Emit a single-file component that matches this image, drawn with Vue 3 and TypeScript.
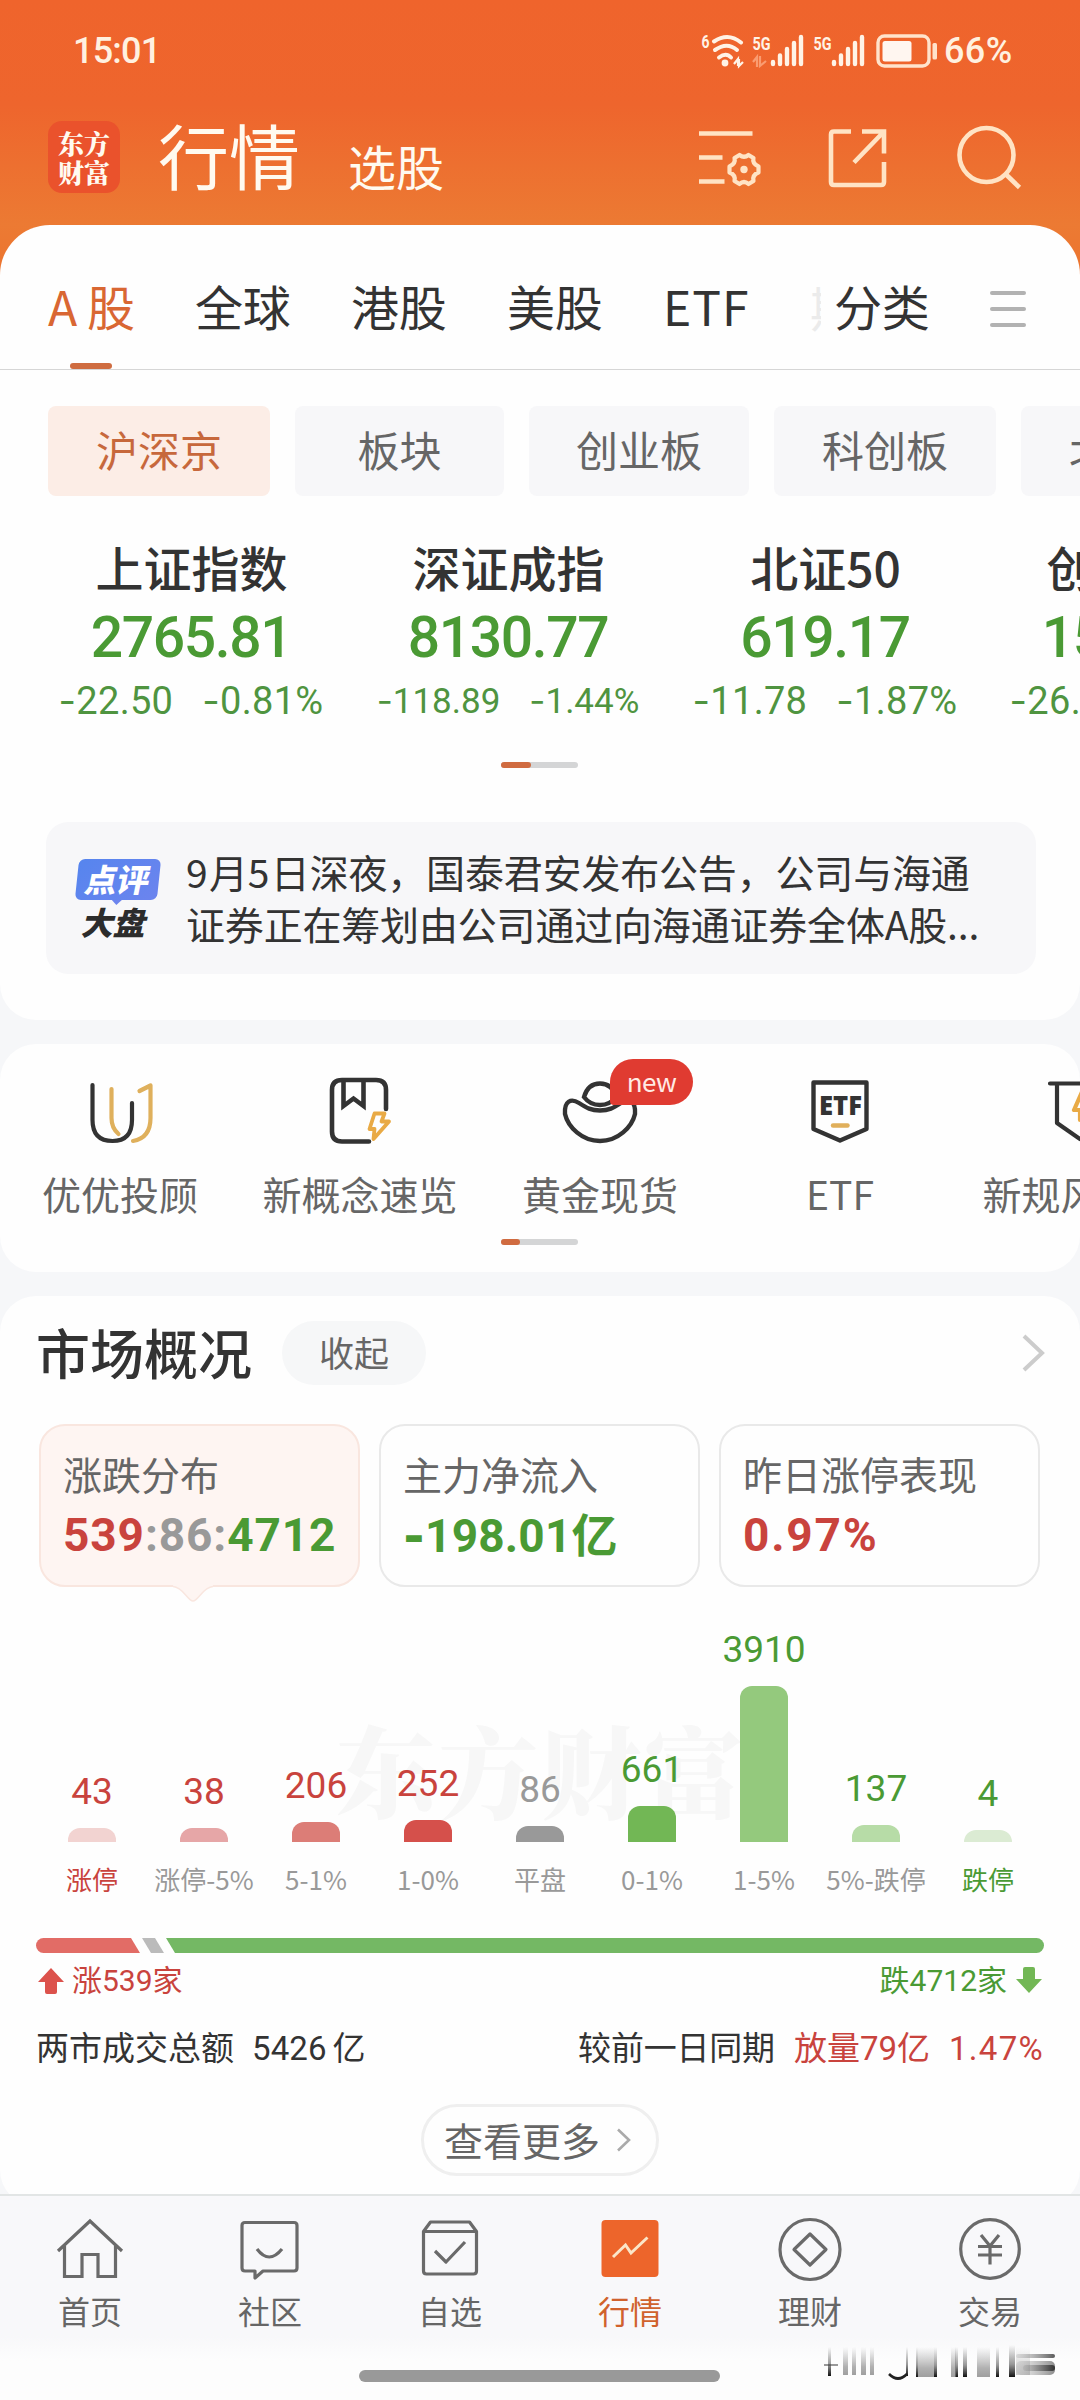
<script setup lang="ts">
interface Quote { name: string; price: string; diff: string; pct: string; small?: boolean }
interface Bar { value: string; label: string; height: number; fill: string; tone: string; labelTone: string }

const markets: string[] = ['全球', '港股', '美股', 'ETF']
const boards: { label: string; width: number }[] = [
  { label: '沪深京', width: 222 },
  { label: '板块', width: 209 },
  { label: '创业板', width: 220 },
  { label: '科创板', width: 222 },
  { label: '北交所', width: 222 },
]
const quotes: Quote[] = [
  { name: '上证指数', price: '2765.81', diff: '22.50', pct: '0.81%' },
  { name: '深证成指', price: '8130.77', diff: '118.89', pct: '1.44%', small: true },
  { name: '北证50', price: '619.17', diff: '11.78', pct: '1.87%' },
  { name: '创业板指', price: '1538.07', diff: '26.28', pct: '1.68%' },
]
const bars: Bar[] = [
  { value: '43', label: '涨停', height: 14, fill: '#f2d3d1', tone: 'red', labelTone: 'red' },
  { value: '38', label: '涨停-5%', height: 14, fill: '#e6a6a7', tone: 'red', labelTone: 'gray' },
  { value: '206', label: '5-1%', height: 20, fill: '#dc7d77', tone: 'red', labelTone: 'gray' },
  { value: '252', label: '1-0%', height: 22, fill: '#d5504b', tone: 'red', labelTone: 'gray' },
  { value: '86', label: '平盘', height: 16, fill: '#999999', tone: 'gray', labelTone: 'gray' },
  { value: '661', label: '0-1%', height: 36, fill: '#72b755', tone: 'green', labelTone: 'gray' },
  { value: '3910', label: '1-5%', height: 156, fill: '#94c97d', tone: 'green', labelTone: 'gray' },
  { value: '137', label: '5%-跌停', height: 17, fill: '#b7dca7', tone: 'green', labelTone: 'gray' },
  { value: '4', label: '跌停', height: 12, fill: '#dbebd3', tone: 'green', labelTone: 'green' },
]
</script>

<template>
  <div class="app">
    <header class="hero">
      <div class="status">
        <span class="clock num">15:01</span>
        <svg class="signals" width="240" height="36" viewBox="0 0 240 36" fill="none">
          <g stroke="#fff3e6" stroke-linecap="round" stroke-width="4">
            <path d="M13 8.500Q27 -1 40 9.500" />
            <path d="M14 17Q26 8.500 36 17" />
            <path d="M18 24.500Q25 19 30 24.500" />
          </g>
          <circle cx="24" cy="30" r="3.400" fill="#fff3e6" />
          <path d="M33 31l4-5v7M38 26v7l4-4" stroke="#fff3e6" stroke-width="2.200" />
          <g fill="#fff3e6" class="tiny">
            <text x="0.500" y="15" textLength="8" lengthAdjust="spacingAndGlyphs">6</text>
            <text x="51.500" y="16.500" textLength="18" lengthAdjust="spacingAndGlyphs">5G</text>
            <text x="112.500" y="16.500" textLength="18" lengthAdjust="spacingAndGlyphs">5G</text>
          </g>
          <path d="M52 29l4-5v10M59 23v10l6-5" stroke="#ffb48f" stroke-width="2.200" opacity=".7" />
          <g stroke="#fff3e6" stroke-width="4.400" stroke-linecap="round">
            <path d="M72 29v2M79 22.500v8.500M86 16v15M93 10v21M100 4v27" />
            <path d="M133 29v2M140 22.500v8.500M147 16v15M154 10v21M161 4v27" />
          </g>
          <rect x="177" y="3" width="51" height="30" rx="6.500" stroke="#ffe3cc" stroke-width="3.400" />
          <rect x="181.500" y="8" width="29" height="20.500" rx="2.500" fill="#fff6f0" />
          <rect x="231.500" y="10" width="4.500" height="16.500" rx="1.500" fill="#ffe3cc" />
        </svg>
        <span class="battery num">66%</span>
      </div>
      <div class="titlebar">
        <div class="logo"><span>东方</span><span>财富</span></div>
        <h1>行情</h1>
        <span class="sub">选股</span>
        <svg class="tools" width="330" height="70" viewBox="0 0 330 70" fill="none" stroke="#ffe3c4" stroke-width="4.600">
          <path d="M4 13.500h53.500M4 37.500h23.500M4 61.500h25.500" />
          <path d="M44.500 35Q49 38.500 53.500 35L58.500 38Q57 43.500 63.500 46.500V52.500Q57 55 58.500 61L53.500 64Q49 60 44.500 64L39.500 61Q41 55 34.500 52.500V46.500Q41 43.500 39.500 38Z" stroke-linejoin="round" stroke-width="4.200" />
          <circle cx="49" cy="49.500" r="3.700" fill="#ffe3c4" stroke="none" />
          <path d="M156 11.500H139Q136 11.500 136 14.500V62Q136 65 139 65H186Q189 65 189 62V42M167 11.500H189V33.500M189 11.500L159 42.500" />
          <circle cx="291.500" cy="35" r="27" />
          <path d="M309.500 53L324.500 67.500" />
        </svg>
      </div>
    </header>

    <main>
      <section class="panel quotes-panel">
        <nav class="markets">
          <span class="market on"><i>A</i>股</span>
          <span v-for="m in markets" :key="m" class="market">{{ m }}</span>
          <span class="peek">期</span>
          <span class="market sort">分类</span>
          <span class="burger"><i /><i /><i /></span>
        </nav>
        <div class="boards">
          <span v-for="(b, i) in boards" :key="b.label" class="board" :class="{ on: i === 0 }" :style="{ width: b.width + 'px' }">{{ b.label }}</span>
        </div>
        <div class="quotes">
          <div v-for="q in quotes" :key="q.name" class="quote">
            <div class="qname">{{ q.name }}</div>
            <div class="price num">{{ q.price }}</div>
            <div class="change num" :class="{ small: q.small }">
              <span><b>-</b>{{ q.diff }}</span><span><b>-</b>{{ q.pct }}</span>
            </div>
          </div>
        </div>
        <div class="pager"><i class="w30" /></div>
        <div class="news">
          <div class="tag">
            <span class="bubble"><em>点评</em></span>
            <em class="dark">大盘</em>
          </div>
          <p><span class="nd">9</span>月<span class="nd">5</span>日深夜，国泰君安发布公告，公司与海通<br>证券正在筹划由公司通过向海通证券全体A股...</p>
        </div>
      </section>

      <section class="panel shortcuts">
        <div class="links">
          <div class="link">
            <svg width="80" height="72" viewBox="0 0 80 72" fill="none" stroke-width="4.200" stroke-linecap="round">
              <path d="M31.500 17V46Q31.500 56 38.500 62M59.500 19L70.500 13.500V46Q70.500 66 53 69" stroke="#dfb05c" stroke-linejoin="round" />
              <path d="M12.500 13V48Q12.500 69 32.500 69Q52 69 52 48V31" stroke="#333" />
            </svg>
            <span>优优投顾</span>
          </div>
          <div class="link">
            <svg width="80" height="72" viewBox="0 0 80 72" fill="none" stroke="#333" stroke-width="4.600" stroke-linecap="round">
              <path d="M49 69.500H22Q12 69.500 12 59.500V18Q12 8 22 8H56Q66 8 66 18V37" />
              <path d="M23.500 9V34L33.500 26.500L43.500 34V9" stroke-linecap="butt" />
              <path d="M54.500 41.500H64.500L61.500 49.500H69L53.500 67L54.500 57H49.500Z" stroke="#e9aa45" stroke-width="3.800" stroke-linejoin="round" />
            </svg>
            <span>新概念速览</span>
          </div>
          <div class="link">
            <svg width="80" height="72" viewBox="0 0 80 72" fill="none" stroke="#333" stroke-width="4.400">
              <path d="M24 25Q28 11.500 40 11.500Q52 11.500 56 25Q50 33 40 33Q30 33 24 25Z" />
              <path d="M5 42C4 29 11 26 19 31C27 36 31 38.500 40 38.500C49 38.500 53 36 61 31C69 26 76 29 75 42C72 55 58 69 40 69C22 69 8 55 5 42Z" />
            </svg>
            <span>黄金现货</span>
            <span class="badge">new</span>
          </div>
          <div class="link">
            <svg width="80" height="72" viewBox="0 0 80 72" fill="none" stroke="#333" stroke-width="4.400" stroke-linejoin="round">
              <path d="M13.500 10.500H66.500V57L40 68.500L13.500 57Z" />
              <path d="M33 53.500H47.500" stroke="#e0af5b" stroke-linecap="round" />
              <text x="19" y="42.500" textLength="43" lengthAdjust="spacingAndGlyphs" class="etf">ETF</text>
            </svg>
            <span class="etflabel">ETF</span>
          </div>
          <div class="link">
            <svg width="80" height="72" viewBox="0 0 80 72" fill="none" stroke="#333" stroke-width="4.200" stroke-linejoin="round" stroke-linecap="round">
              <path d="M10 11.500H70M17 12V51L40 67L63 51V12" />
              <path d="M42 20L34 38H40V48L50 31H44Z" stroke="#e9aa45" />
            </svg>
            <span>新规风险股</span>
          </div>
        </div>
        <div class="pager"><i class="w19" /></div>
      </section>

      <section class="panel overview">
        <div class="ohead">
          <h2>市场概况</h2>
          <span class="fold">收起</span>
          <svg width="24" height="40" viewBox="0 0 24 40" fill="none" stroke="#ccc" stroke-width="4"><path d="M2 3L20 20L2 37" /></svg>
        </div>
        <div class="stats">
          <div class="stat on">
            <span class="slabel">涨跌分布</span>
            <span class="sval num"><i class="red">539</i><i class="gray">:86:</i><i class="green">4712</i></span>
            <svg class="tip" width="40" height="18" viewBox="0 0 40 18"><path d="M0 0H40V1.500C30 2 25 16 20 16C15 16 10 2 0 1.500Z" fill="#fef5f2" /><path d="M0 1.500C10 2 15 16 20 16C25 16 30 2 40 1.500" fill="none" stroke="#f9e6df" stroke-width="1.500" /></svg>
          </div>
          <div class="stat">
            <span class="slabel">主力净流入</span>
            <span class="sval num green"><b>-</b>198.01亿</span>
          </div>
          <div class="stat">
            <span class="slabel">昨日涨停表现</span>
            <span class="sval num red pct">0.97%</span>
          </div>
        </div>
        <div class="chart">
          <span class="mark">东方财富</span>
          <div v-for="b in bars" :key="b.label" class="col">
            <span class="bval num" :class="b.tone">{{ b.value }}</span>
            <div class="bar" :style="{ height: b.height + 'px', background: b.fill }" />
            <span class="blabel" :class="b.labelTone">{{ b.label }}</span>
          </div>
        </div>
        <svg class="ratio" width="1008" height="15" viewBox="0 0 1008 15">
          <path d="M7.500 0H95L104 15H7.500A7.500 7.500 0 0 1 7.500 0Z" fill="#e26c66" />
          <path d="M106 0H119L128 15H115Z" fill="#bbb" />
          <path d="M130 0H1000.500A7.500 7.500 0 0 1 1000.500 15H139Z" fill="#74b864" />
        </svg>
        <div class="updown">
          <div class="red"><svg width="28" height="28" viewBox="0 0 28 28"><path d="M14 1L27 15H20V25Q20 27 18 27H10Q8 27 8 25V15H1Z" fill="#dc524c" /></svg><span>涨<i class="num">539</i>家</span></div>
          <div class="green"><span>跌<i class="num">4712</i>家</span><svg width="28" height="28" viewBox="0 0 28 28"><path d="M14 27L27 13H20V3Q20 1 18 1H10Q8 1 8 3V13H1Z" fill="#72b755" /></svg></div>
        </div>
        <div class="turnover">
          <span>两市成交总额</span><span class="num amount">5426</span><span class="yi">亿</span>
          <span class="push">较前一日同期</span>
          <span class="red vol">放量<i class="num">79</i>亿</span>
          <span class="red num rate">1.47%</span>
        </div>
        <div class="more">
          <span>查看更多</span>
          <svg width="16" height="24" viewBox="0 0 16 24" fill="none" stroke="#aaa" stroke-width="2.600"><path d="M2 1.500L13 12L2 22.500" /></svg>
        </div>
      </section>
    </main>

    <footer class="tabbar">
      <div class="tabs">
        <div class="tab">
          <svg width="68" height="68" viewBox="0 0 68 68"><path d="M2 35L34 5L66 35M8.500 30V60.500H26V38.500H42V60.500H59.500V30" /></svg>
          <span>首页</span>
        </div>
        <div class="tab">
          <svg width="68" height="68" viewBox="0 0 68 68"><path d="M9 6.500H58Q61 6.500 61 9.500V52Q61 55 58 55H27L19 62V55H9Q6 55 6 52V9.500Q6 6.500 9 6.500Z" stroke-linejoin="round" /><path d="M21 33Q33 49 46 33" /></svg>
          <span>社区</span>
        </div>
        <div class="tab">
          <svg width="68" height="68" viewBox="0 0 68 68"><path d="M7.500 15.500L14.500 6H53.500L60.500 15.500V55Q60.500 58 57.500 58H10.500Q7.500 58 7.500 55ZM7.500 15.500H60.500M19 35L30 46L49 26" stroke-linejoin="round" /></svg>
          <span>自选</span>
        </div>
        <div class="tab on">
          <svg width="68" height="68" viewBox="0 0 68 68"><rect x="5.500" y="4" width="57" height="57" rx="4" fill="#ed652b" stroke="none" /><path d="M17 41L29.500 29L35 37L51.500 21.500" stroke="#fbe6c8" stroke-width="3" /></svg>
          <span>行情</span>
        </div>
        <div class="tab">
          <svg width="68" height="68" viewBox="0 0 68 68"><circle cx="34" cy="33.500" r="30" /><path d="M34 18L50 33.500L34 49L18 33.500Z" stroke-linejoin="round" /></svg>
          <span>理财</span>
        </div>
        <div class="tab">
          <svg width="68" height="68" viewBox="0 0 68 68"><circle cx="34" cy="33" r="29.300" /><path d="M25 19L34 30L43 19M34 30V48.500M22 30.500H46M22 39H46" /></svg>
          <span>交易</span>
        </div>
      </div>
      <div class="home" />
      <svg class="smear" width="236" height="38" viewBox="0 0 236 38">
        <defs>
          <linearGradient id="sm" x1="0" y1="0" x2="0" y2="1"><stop offset="0" stop-color="#333" stop-opacity="0" /><stop offset=".6" stop-color="#333" stop-opacity=".5" /><stop offset="1" stop-color="#111" /></linearGradient>
          <linearGradient id="sl" x1="0" y1="0" x2="0" y2="1"><stop offset="0" stop-color="#999" stop-opacity="0" /><stop offset=".7" stop-color="#888" stop-opacity=".65" /><stop offset="1" stop-color="#777" stop-opacity=".7" /></linearGradient>
          <linearGradient id="sh" x1="0" y1="0" x2="1" y2="0"><stop offset="0" stop-color="#999" stop-opacity=".3" /><stop offset="1" stop-color="#333" /></linearGradient>
        </defs>
        <rect x="1" y="21" width="14" height="2" fill="#999" />
        <g fill="url(#sm)">
          <rect x="5" y="4" width="3" height="29" /><rect x="83" y="4" width="2" height="29" /><rect x="93" y="4" width="2" height="30" /><rect x="111" y="4" width="3" height="30" />
          <rect x="132" y="4" width="3" height="30" /><rect x="140" y="4" width="4" height="30" /><rect x="173" y="4" width="3" height="30" /><rect x="186" y="2" width="6" height="32" />
        </g>
        <g fill="url(#sl)">
          <rect x="20" y="4" width="5" height="28" /><rect x="29" y="4" width="4" height="28" /><rect x="38" y="4" width="5" height="28" /><rect x="47" y="4" width="4" height="28" />
          <rect x="95" y="4" width="16" height="30" /><rect x="128" y="4" width="5" height="30" /><rect x="154" y="4" width="13" height="30" /><rect x="193" y="4" width="14" height="28" opacity=".5" />
        </g>
        <path d="M66 31Q75 40 84 31" fill="none" stroke="#222" stroke-width="2.600" />
        <rect x="193" y="11" width="39" height="4" rx="2" fill="url(#sh)" opacity=".8" />
        <rect x="193" y="18" width="39" height="14" rx="5" fill="url(#sh)" opacity=".55" />
        <rect x="200" y="22" width="32" height="6" rx="3" fill="url(#sh)" />
      </svg>
    </footer>
  </div>
</template>

<style>
html, body { margin: 0; background: #fdfdfd; }
</style>

<style scoped>
.app { width: 1080px; height: 2400px; overflow: hidden; display: flex; flex-direction: column; background: #f6f7f9; font-family: "Noto Sans CJK SC", sans-serif; color: #333; white-space: nowrap; }
.num { font-family: Roboto, "Noto Sans CJK SC", sans-serif; }
i, em { font-style: normal; }
.red { color: #c9433d; }
.green { color: #4a9a34; }
.gray { color: #999; }

.hero { height: 275px; flex: none; background: linear-gradient(#ef642c 0, #ee652d 105px, #ec7a33 225px, #ec742f 275px); color: #fffaf0; }
.status { height: 101px; display: flex; align-items: center; box-sizing: border-box; padding-left: 73px; }
.clock { width: 628px; font-size: 36px; letter-spacing: -0.8px; color: #fff1e0; font-weight: 500; }
.signals { flex: none; }
.tiny { font: 700 19px Roboto, sans-serif; }
.battery { font-size: 36px; color: #fff1e0; margin-left: 3px; letter-spacing: 0.4px; font-weight: 500; }
.titlebar { height: 112px; display: flex; align-items: center; padding-left: 48px; }
.logo { width: 72px; height: 72px; border-radius: 14px; background: #ea522c; display: flex; flex-direction: column; justify-content: center; font: 900 26px/29px "Noto Serif CJK SC", "Noto Sans CJK SC", serif; text-align: center; flex: none; }
h1 { margin: -8px 0 0 38px; font-size: 71px; line-height: 90px; font-weight: 400; width: 190px; }
.sub { font-size: 48px; line-height: 60px; padding-top: 16px; width: 347px; }
.tools { flex: none; margin-top: -4px; }

main { margin-top: -50px; flex: none; }
.panel { background: #fefefe; border-radius: 36px; margin-bottom: 24px; overflow: hidden; box-sizing: border-box; }
.quotes-panel { height: 795px; border-radius: 50px 50px 36px 36px; }
.markets { height: 145px; box-sizing: border-box; border-bottom: 1px solid #d6d6d6; display: flex; align-items: center; padding-left: 47px; font-size: 48px; }
.market { width: 96px; margin-right: 60px; height: 144px; line-height: 161px; letter-spacing: -0.2px; }
.market.on { width: 87px; margin-right: 61px; color: #d96733; position: relative; }
.market.on i { display: inline-block; width: 39px; padding-left: 1px; }
.market.on::after { content: ""; position: absolute; left: 23px; bottom: 0; width: 42px; height: 6px; border-radius: 3px; background: #cf6c40; }
.market:nth-child(5) { letter-spacing: 1px; }
.peek { width: 11px; overflow: hidden; margin: 18px 13px 0 -9px; color: #ebebeb; }
.market.sort { margin-right: 60px; }
.burger { display: flex; flex-direction: column; gap: 12px; margin-top: 24px; }
.burger i { width: 36px; height: 4px; border-radius: 2px; background: #b2b2b2; }
.boards { display: flex; gap: 25px; padding: 36px 0 0 48px; }
.board { flex: none; height: 90px; line-height: 86px; border-radius: 8px; background: #f7f7f9; color: #666; text-align: center; font-size: 42px; }
.board.on { background: #fcede6; color: #c7683c; }
.quotes { display: flex; padding: 38px 0 0 33px; height: 228px; box-sizing: content-box; }
.quote { width: 317px; flex: none; text-align: center; }
.qname { font-size: 48px; line-height: 64px; font-weight: 500; }
.price { font-size: 57px; line-height: 70px; font-weight: 500; color: #4a9a34; letter-spacing: -1.4px; margin: 5px 0 -4px -1px; }
.change { display: flex; justify-content: center; gap: 29px; color: #4f9440; font-size: 38px; line-height: 62px; margin-left: -1px; letter-spacing: 0.3px; }
.change.small { font-size: 35px; letter-spacing: 0; }
.change b { font-family: Inter, sans-serif; font-weight: 400; }
.pager { width: 77px; height: 6px; border-radius: 3px; background: #d4d5d6; margin: 0 auto 0 501px; }
.pager i { display: block; height: 6px; border-radius: 3px; background: #d06b40; }
.w30 { width: 30px; }
.w19 { width: 19px; }
.news { margin: 54px 44px 0 46px; height: 152px; border-radius: 22px; background: #f7f7f9; display: flex; box-sizing: border-box; padding: 23px 0 0 30px; }
.tag { width: 110px; padding-top: 14px; }
.bubble { display: block; position: relative; width: 82px; height: 41px; margin-left: 1px; border-radius: 6px; background: linear-gradient(135deg, #5685ee, #6c84ee); transform: skewX(-6deg); color: #fff; text-align: center; font-weight: 900; font-size: 32px; line-height: 38px; }
.bubble em { display: inline-block; transform: skewX(-6deg); }
.bubble::after { content: ""; position: absolute; left: 37px; top: 41px; border: 5px solid transparent; border-top-color: #6c84ee; border-bottom: 0; }
.tag .dark { display: block; font-size: 32px; line-height: 34px; font-weight: 900; transform: skewX(-14deg); margin: 4px 0 0 8px; color: #2c2c2c; }
.news p { margin: 0; font-size: 39px; line-height: 52px; letter-spacing: -0.18px; }
.nd { display: inline-block; width: 23px; }

.shortcuts { height: 228px; }
.links { display: flex; height: 195px; padding-top: 28px; box-sizing: border-box; }
.link { flex: none; width: 240px; display: flex; flex-direction: column; align-items: center; position: relative; font-size: 39px; line-height: 56px; color: #666; }
.link svg { display: block; margin-bottom: 21px; }
.badge { position: absolute; left: 130px; top: -13px; width: 83px; height: 46px; border-radius: 23px 23px 23px 4px; background: #e03b31; color: #ffeae4; font-size: 26px; letter-spacing: -0.5px; line-height: 44px; text-align: center; }
.etf { font: 900 27px "Noto Sans", sans-serif; fill: #333; stroke: none; }

.overview { height: 910px; margin-bottom: 0; }
.ohead { height: 112px; display: flex; align-items: center; padding: 0 34px 0 36px; box-sizing: border-box; }
h2 { margin: 0 31px 0 0; font-size: 54px; line-height: 70px; font-weight: 500; width: 215px; }
.fold { width: 144px; height: 64px; line-height: 62px; border-radius: 32px; background: #f6f7f8; color: #666; text-align: center; font-size: 35px; margin-top: 1px; }
.ohead svg { margin: 2px 0 0 auto; }
.stats { display: flex; gap: 19px; padding: 16px 0 0 39px; }
.stat { width: 321px; height: 163px; box-sizing: border-box; border: 2px solid #e9e9e9; border-radius: 26px; padding: 21px 0 0 22px; position: relative; display: flex; flex-direction: column; }
.stat.on { background: #fef5f2; border-color: #f9e6df; }
.slabel { font-size: 39px; line-height: 52px; color: #666; }
.sval { font-size: 46px; line-height: 64px; font-weight: 700; letter-spacing: 0.9px; margin-top: 4px; }
.sval.green { letter-spacing: 0.2px; }
.sval.pct { letter-spacing: 1.8px; }
.sval b { font-family: Inter, sans-serif; }
.tip { position: absolute; left: 132px; top: 159px; }
.chart { display: flex; position: relative; padding-left: 36px; height: 307px; align-items: flex-end; }
.mark { position: absolute; left: 336px; top: 121px; font: 900 100px/120px "Noto Serif CJK SC", "Noto Sans CJK SC", serif; letter-spacing: 2.5px; color: #f7f7f7; }
.col { width: 112px; display: flex; flex-direction: column; align-items: center; position: relative; }
.bval { font-size: 37px; line-height: 40px; margin-bottom: 16px; }
.bar { width: 48px; border-radius: 12px 12px 0 0; }
.blabel { font-size: 26px; line-height: 30px; margin-top: 22px; height: 30px; }
.ratio { display: block; margin: 44px 0 0 36px; }
.updown { display: flex; justify-content: space-between; padding: 7px 36px 0; font-size: 30px; line-height: 36px; }
.updown div { display: flex; align-items: center; }
.updown svg { margin: 2px 7px 0 1px; }
.updown .green svg { margin: 0 1px 0 8px; }
.turnover { display: flex; align-items: baseline; padding: 22px 37px 0 36px; font-size: 33px; line-height: 50px; }
.amount { margin-left: 18px; letter-spacing: 0.1px; }
.yi { margin-left: 6px; margin-right: auto; }
.push { letter-spacing: -0.2px; }
.vol { margin-left: 19px; }
.rate { margin-left: 19px; letter-spacing: 1.3px; margin-right: -1px; }
.more { width: 238px; height: 72px; box-sizing: border-box; border: 3px solid #efefef; border-radius: 36px; margin: 30px auto 0; display: flex; align-items: center; padding-left: 20px; gap: 16px; font-size: 39px; line-height: 60px; color: #666; }
.more span { margin-top: -3px; }

.tabbar { height: 206px; margin-top: -12px; flex: none; position: relative; border-top: 2px solid #e2e5e5; box-sizing: border-box; background: linear-gradient(#f8f8fa 0, #f8f8fa 140px, #fdfdfd 165px); }
.tabs { display: flex; padding-top: 20px; }
.tab { width: 180px; display: flex; flex-direction: column; align-items: center; font-size: 32px; line-height: 40px; color: #666; }
.tab svg { fill: none; stroke: #6a6a6a; stroke-width: 3.2; margin-bottom: 6px; }
.tab.on { color: #d0622d; }
.home { width: 361px; height: 12px; border-radius: 6px; background: #999; margin: 40px auto 0 359px; }
.smear { position: absolute; left: 823px; top: 147px; }
</style>
